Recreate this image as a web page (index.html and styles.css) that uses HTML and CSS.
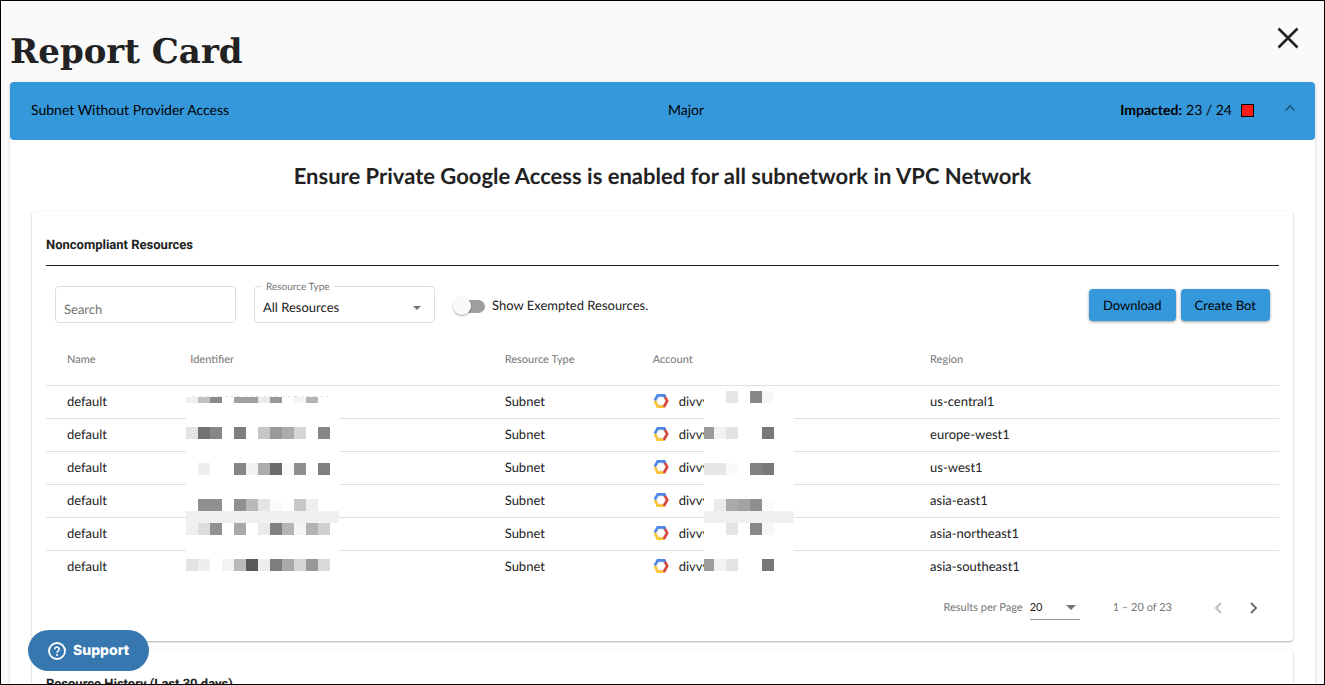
FILE: index.html
```html
<!DOCTYPE html>
<html lang="en">
<head>
  <meta charset="UTF-8">
  <meta name="viewport" content="width=device-width, initial-scale=1.0">
  <title>Report Card</title>
  <link rel="stylesheet" href="styles.css">
</head>
<body>
  <svg width="0" height="0" class="defs" aria-hidden="true">
    <defs>
      <radialGradient id="hexFill">
        <stop offset="0.4" stop-color="#fff"/>
        <stop offset="1" stop-color="#dadada"/>
      </radialGradient>
      <symbol id="gcp" viewBox="0 0 16 16">
        <path d="M4.6 2.2h6.8L14.4 8l-3 5.8H4.6L1.6 8z" fill="url(#hexFill)"/>
        <g fill="none" stroke-width="2.6">
          <path d="M1.8 7.6L4.6 13.6h6.6" stroke="#fbc638"/>
          <path d="M11.3 2.6L14.2 8l-3.3 6" stroke="#d8453a"/>
          <path d="M1.8 7.4L4.7 2.4h6.6l.8 1.4" stroke="#4a86e8"/>
        </g>
      </symbol>
    </defs>
  </svg>

  <header class="page-header">
    <h1>Report Card</h1>
    <button type="button" class="close" aria-label="Close">
      <svg width="22" height="22" viewBox="0 0 22 22"><path d="M1.5 1.5l19 19M20.5 1.5l-19 19" stroke="#222" stroke-width="2.6" fill="none"/></svg>
    </button>
  </header>

  <main class="panel">
    <div class="panel-header">
      <span>Subnet Without Provider Access</span>
      <div class="panel-right">
        <span>Major</span>
        <span class="impacted"><b>Impacted:</b> 23 / 24 <i class="flag"></i></span>
        <button type="button" class="collapse" aria-label="Collapse">
          <svg width="12" height="8" viewBox="0 0 12 8"><path d="M1.5 6.5L6 2l4.5 4.5" stroke="#1f587f" stroke-width="1.6" fill="none"/></svg>
        </button>
      </div>
    </div>

    <h2>Ensure Private Google Access is enabled for all subnetwork in VPC Network</h2>

    <section class="card">
      <h3>Noncompliant Resources</h3>
      <div class="toolbar">
        <input type="text" class="field search" placeholder="Search" aria-label="Search">
        <div class="select-wrap">
          <label for="type">Resource Type</label>
          <select id="type" class="field">
            <option>All Resources</option>
          </select>
          <svg class="arrow" width="8" height="4" viewBox="0 0 8 4"><path d="M0 0h8L4 4z" fill="#757575"/></svg>
        </div>
        <label class="toggle"><input type="checkbox">Show Exempted Resources.</label>
        <div class="actions">
          <button type="button" class="btn">Download</button>
          <button type="button" class="btn">Create Bot</button>
        </div>
      </div>

      <table>
        <colgroup>
          <col class="c-name"><col class="c-id"><col class="c-type"><col class="c-account"><col>
        </colgroup>
        <thead>
          <tr><th>Name</th><th>Identifier</th><th>Resource Type</th><th>Account</th><th>Region</th></tr>
        </thead>
        <tbody>
          <tr>
            <td>default</td>
            <td>
              <!-- redacted identifiers, covers all rows -->
              <svg class="mask mask-id" width="153" height="182" viewBox="0 0 153 182" shape-rendering="crispEdges">
                <path fill="#fff" d="M0 1h153v181H0z"/>
                <path stroke="#ddd" stroke-dasharray="2 4 3 5 2 3" d="M7 .5h136"/>
                <path fill="#efefef" d="M0 1h12v6H0z"/><path fill="#c0c0c0" d="M12 1h12v6H12z"/><path fill="#8a8a8a" d="M24 1h12v6H24z"/><path fill="#a0a0a0" d="M48 1h24v6H48z"/><path fill="#ebebeb" d="M72 1h12v6H72z"/><path fill="#999" d="M84 1h12v6H84z"/><path fill="#f5f5f5" d="M108 1h12v6h-12z"/><path fill="#b3b3b3" d="M120 1h12v6h-12z"/>
                <path fill="#e5e5e5" d="M0 31h12v12H0z"/><path fill="#737373" d="M12 31h12v12H12z"/><path fill="#878787" d="M24 31h12v12H24z"/><path fill="#808080" d="M48 31h12v12H48z"/><path fill="#c6c6c6" d="M72 31h12v12H72z"/><path fill="#999" d="M84 31h12v12H84z"/><path fill="#acacac" d="M96 31h12v12H96z"/><path fill="#d6d6d6" d="M108 31h12v12h-12z"/><path fill="#868686" d="M132 31h12v12h-12z"/>
                <path fill="#eee" d="M12 67h12v12H12z"/><path fill="#868686" d="M48 67h12v12H48z"/><path fill="#f2f2f2" d="M60 67h12v12H60z"/><path fill="#acacac" d="M72 67h12v12H72z"/><path fill="#6b6b6b" d="M84 67h12v12H84z"/><path fill="#fafafa" d="M96 67h12v12H96z"/><path fill="#8f8f8f" d="M108 67h12v12h-12z"/><path fill="#7f7f7f" d="M132 67h12v12h-12z"/>
                <path fill="#909090" d="M12 103h24v12H12zM48 103h12v12H48z"/><path fill="#b8b8b8" d="M60 103h12v12H60z"/><path fill="#e4e4e4" d="M72 103h12v12H72z"/><path fill="#fbfbfb" d="M84 103h12v12H84z"/><path fill="#c8c8c8" d="M108 103h12v12h-12z"/><path fill="#eee" d="M120 103h12v12h-12z"/>
                <path fill="#f0f0f0" d="M0 115h153v12H0z"/>
                <path fill="#efefef" d="M0 127h12v12H0z"/><path fill="#ddd" d="M12 127h12v12H12z"/><path fill="#909090" d="M24 127h12v12H24z"/><path fill="#a9a9a9" d="M48 127h12v12H48z"/><path fill="#ebebeb" d="M72 127h12v12H72z"/><path fill="#808080" d="M84 127h12v12H84z"/><path fill="#b5b5b5" d="M96 127h12v12H96z"/><path fill="#f4f4f4" d="M108 127h12v12h-12z"/><path fill="#b3b3b3" d="M120 127h12v12h-12z"/><path fill="#d0d0d0" d="M132 127h12v12h-12z"/>
                <path fill="#e3e3e3" d="M0 163h12v12H0z"/><path fill="#eee" d="M12 163h12v12H12zM72 163h12v12H72z"/><path fill="#f3f3f3" d="M36 163h12v12H36z"/><path fill="#bababa" d="M48 163h12v12H48z"/><path fill="#595959" d="M60 163h12v12H60z"/><path fill="#7d7d7d" d="M84 163h12v12H84z"/><path fill="#a9a9a9" d="M96 163h12v12H96z"/><path fill="#d5d5d5" d="M108 163h12v12h-12z"/><path fill="#999" d="M120 163h12v12h-12z"/><path fill="#dadada" d="M132 163h12v12h-12z"/>
              </svg>
            </td>
            <td>Subnet</td>
            <td>
              <span class="account"><svg width="16" height="16"><use href="#gcp"/></svg>divvy</span>
              <svg class="mask mask-account" width="90" height="190" viewBox="0 0 90 190" shape-rendering="crispEdges">
                <path fill="#fff" d="M0 0h90v190H0z"/>
                <path fill="#e5e5e5" d="M22 5h12v12H22z"/><path fill="#888" d="M46 5h12v12H46z"/><path fill="#f7f7f7" d="M58 5h12v12H58z"/>
                <path fill="#9c9c9c" d="M0 41h10v12H0z"/><path fill="#f2f2f2" d="M10 41h12v12H10z"/><path fill="#e3e3e3" d="M22 41h12v12H22z"/><path fill="#777" d="M58 41h12v12H58z"/>
                <path fill="#e7e7e7" d="M0 77h22v12H0z"/><path fill="#fafafa" d="M22 77h12v12H22z"/><path fill="#828282" d="M46 77h12v12H46z"/><path fill="#7a7a7a" d="M58 77h12v12H58z"/>
                <path fill="#ebebeb" d="M10 113h12v12H10z"/><path fill="#aaa" d="M22 113h12v12H22z"/><path fill="#a3a3a3" d="M34 113h12v12H34z"/><path fill="#8f8f8f" d="M46 113h12v12H46z"/><path fill="#fbfbfb" d="M58 113h12v12H58z"/>
                <path fill="#f0f0f0" d="M0 125h90v12H0z"/>
                <path fill="#e5e5e5" d="M22 137h12v12H22z"/><path fill="#888" d="M46 137h12v12H46z"/><path fill="#f7f7f7" d="M58 137h12v12H58z"/>
                <path fill="#9c9c9c" d="M0 173h10v12H0z"/><path fill="#f2f2f2" d="M10 173h12v12H10z"/><path fill="#e3e3e3" d="M22 173h12v12H22z"/><path fill="#777" d="M58 173h12v12H58z"/>
              </svg>
            </td>
            <td>us-central1</td>
          </tr>
          <tr><td>default</td><td></td><td>Subnet</td><td><span class="account"><svg width="16" height="16"><use href="#gcp"/></svg>divvy</span></td><td>europe-west1</td></tr>
          <tr><td>default</td><td></td><td>Subnet</td><td><span class="account"><svg width="16" height="16"><use href="#gcp"/></svg>divvy</span></td><td>us-west1</td></tr>
          <tr><td>default</td><td></td><td>Subnet</td><td><span class="account"><svg width="16" height="16"><use href="#gcp"/></svg>divvy</span></td><td>asia-east1</td></tr>
          <tr><td>default</td><td></td><td>Subnet</td><td><span class="account"><svg width="16" height="16"><use href="#gcp"/></svg>divvy</span></td><td>asia-northeast1</td></tr>
          <tr><td>default</td><td></td><td>Subnet</td><td><span class="account"><svg width="16" height="16"><use href="#gcp"/></svg>divvy</span></td><td>asia-southeast1</td></tr>
        </tbody>
      </table>

      <div class="pager">
        <label for="per-page">Results per Page</label>
        <div class="per-page">
          <select id="per-page"><option>20</option></select>
          <svg class="arrow" width="10" height="5" viewBox="0 0 10 5"><path d="M0 0h10L5 5z" fill="#757575"/></svg>
        </div>
        <span class="range">1 – 20 of 23</span>
        <button type="button" class="step" aria-label="Previous page" disabled>
          <svg width="8" height="12" viewBox="0 0 8 12"><path d="M7 1L2 6l5 5" stroke="#bdbdbd" stroke-width="1.8" fill="none"/></svg>
        </button>
        <button type="button" class="step" aria-label="Next page">
          <svg width="8" height="12" viewBox="0 0 8 12"><path d="M1 1l5 5-5 5" stroke="#707070" stroke-width="2" fill="none"/></svg>
        </button>
      </div>
    </section>

    <section class="card">
      <h3>Resource History (Last 30 days)</h3>
    </section>
  </main>

  <button type="button" class="support">
    <svg width="18" height="18" viewBox="0 0 18 18" fill="none" stroke="#fff">
      <circle cx="9" cy="9" r="8" stroke-width="1.8"/>
      <path d="M6.8 7.2a2.2 2.2 0 1 1 3.3 1.9c-.8.5-1.1.8-1.1 1.7" stroke-width="1.6"/>
      <circle cx="9" cy="13" r="1" fill="#fff" stroke="none"/>
    </svg>
    Support
  </button>
</body>
</html>
```
FILE: styles.css
```css
* {
  box-sizing: border-box;
}
body {
  margin: 0;
  height: 100vh;
  overflow: hidden;
  padding: 0 9px;
  border: 1px solid #000;
  background: #fafafa;
  color: #222;
  font-family: Lato, Arial, sans-serif;
  font-size: 13px;
  line-height: 16px;
  text-rendering: geometricPrecision;
}
button, input, select {
  font: inherit;
  text-rendering: inherit;
}
button {
  border: none;
  background: none;
  padding: 0;
  cursor: pointer;
}
svg {
  display: block;
  flex: none;
}
.defs {
  position: absolute;
}
.page-header {
  display: flex;
  justify-content: space-between;
  align-items: flex-start;
  height: 81px;
  padding: 26px 16px 0 0;
}
h1 {
  margin: 0;
  font-family: "DejaVu Serif", serif;
  font-size: 34px;
  line-height: 50px;
  font-weight: bold;
}
.panel {
  background: #fff;
  border-radius: 4px;
  min-height: 100vh;
  box-shadow: 0 1px 3px rgba(0,0,0,0.2);
}
.panel-header {
  display: grid;
  grid-template-columns: 1fr 1fr;
  align-items: center;
  height: 58px;
  padding: 0 10px 2px 21px;
  border-radius: 4px;
  background: #3598db;
  color: #000;
  font-size: 14px;
}
.panel-right {
  display: flex;
  align-items: center;
}
.impacted {
  display: flex;
  align-items: center;
  gap: 4px;
  margin-left: auto;
}
.flag {
  width: 13px;
  height: 13px;
  margin-left: 5px;
  border: 1px solid #000;
  background: #ff1a1a;
}
.collapse {
  margin: 0 9px 4px 30px;
}
h2 {
  margin: 0;
  padding: 20px 0 19px;
  text-align: center;
  font-size: 22px;
  line-height: 32px;
}
.card {
  margin: 0 22px 9px;
  padding: 0 14px;
  border-radius: 4px;
  box-shadow: 0 1px 2px rgba(0,0,0,0.3), 0 0 2px rgba(0,0,0,0.06);
}
h3 {
  margin: 0;
  padding: 26px 0 11px;
  border-bottom: 1px solid #222;
  font-family: Roboto, Arial, sans-serif;
  font-size: 13px;
  line-height: 17px;
  font-weight: bold;
}
.toolbar {
  display: flex;
  align-items: center;
  padding: 20px 9px 0;
}
.field {
  display: block;
  width: 181px;
  height: 37px;
  padding: 5px 8px 0;
  border: 1px solid #ddd;
  border-radius: 4px;
  background: #fff;
  color: #222;
  appearance: none;
}
.search {
  padding-top: 9px;
}
.search::placeholder {
  color: #757575;
}
.select-wrap {
  position: relative;
  margin: 0 18px;
}
.select-wrap label {
  position: absolute;
  left: 8px;
  top: -6px;
  padding: 0 4px;
  background: #fff;
  color: #757575;
  font-size: 10px;
  line-height: 14px;
}
.arrow {
  position: absolute;
  right: 14px;
  top: 20px;
  pointer-events: none;
}
.toggle {
  display: flex;
  align-items: center;
  gap: 7px;
}
.toggle input {
  appearance: none;
  display: flex;
  align-items: center;
  width: 32px;
  height: 13px;
  margin: 3px 0 0;
  border-radius: 7px;
  background: linear-gradient(90deg, #fff 8px, #9e9e9e 8px);
}
.toggle input::before {
  content: "";
  width: 18px;
  height: 18px;
  border-radius: 50%;
  background: #fafafa;
  box-shadow: 0 1px 2px rgba(0,0,0,0.35);
}
.actions {
  display: flex;
  gap: 5px;
  margin-left: auto;
}
.btn {
  height: 32px;
  padding: 0 14px;
  border-radius: 4px;
  background: #3598db;
  color: #000;
  box-shadow: 0 1px 3px rgba(0,0,0,0.4);
}
table {
  width: 100%;
  table-layout: fixed;
  border-collapse: collapse;
  margin-top: 12px;
}
.c-name { width: 10%; }
.c-id { width: 25.5%; }
.c-type { width: 12%; }
.c-account { width: 22.5%; }
th, td {
  position: relative;
  padding: 0 21px;
  text-align: left;
  border-bottom: 1px solid #e0e0e0;
}
th {
  height: 50px;
  color: #757575;
  font-size: 11px;
  font-weight: normal;
}
td {
  height: 33px;
  padding-bottom: 2px;
}
tbody tr:last-child td {
  border-bottom: none;
}
.account {
  display: flex;
  align-items: center;
  gap: 10px;
}
.mask {
  position: absolute;
  z-index: 1;
}
.mask-id {
  left: 17px;
  top: 10px;
}
.mask-account {
  left: 72px;
  top: 0;
}
.pager {
  display: flex;
  align-items: center;
  justify-content: flex-end;
  padding: 13px 21px 21px 0;
  color: #757575;
  font-size: 11px;
}
.per-page {
  position: relative;
  margin: 0 33px 0 7px;
}
.per-page select {
  display: block;
  width: 50px;
  height: 24px;
  padding: 0;
  border: none;
  border-bottom: 1px solid #949494;
  border-radius: 0;
  background: none;
  color: #222;
  font-size: 11px;
  appearance: none;
}
.per-page .arrow {
  right: 4px;
  top: 9px;
}
.range {
  margin-right: 14px;
}
.step {
  margin-left: 28px;
}
.support {
  position: fixed;
  left: 28px;
  bottom: 14px;
  z-index: 2;
  display: flex;
  align-items: center;
  gap: 7px;
  height: 41px;
  padding: 0 20px;
  border-radius: 21px;
  background: #3777b0;
  color: #fff;
  font-family: Inter, Arial, sans-serif;
  font-size: 14px;
  font-weight: 800;
}
```
